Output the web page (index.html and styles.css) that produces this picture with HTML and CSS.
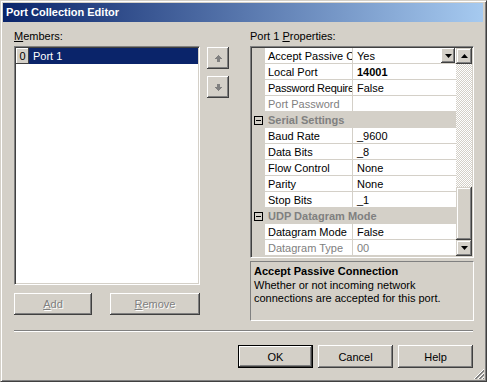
FILE: index.html
```html
<!DOCTYPE html>
<html lang="en">
<head>
    <meta charset="UTF-8">
    <title>Port Collection Editor</title>
    <link rel="stylesheet" href="styles.css">
</head>
<body>
<div class="window">
    <div class="titlebar">Port Collection Editor</div>

    <div class="main">
        <div class="members">
            <div class="label"><u>M</u>embers:</div>
            <div class="listbox">
                <div class="item"><span class="index">0</span><span class="item-text">Port 1</span></div>
            </div>
            <div class="member-buttons">
                <button class="btn btn-add" disabled><u>A</u>dd</button>
                <button class="btn btn-remove" disabled><u>R</u>emove</button>
            </div>
        </div>

        <!-- move up / move down -->
        <div class="order">
            <button class="btn arrow">
                <svg width="7" height="7" viewBox="0 0 7 7"><path d="M3 0h1v1h1v1h1v1h1v1H5v3H2V4H0V3h1V2h1V1h1z" fill="#808080"/></svg>
            </button>
            <button class="btn arrow">
                <svg width="7" height="7" viewBox="0 0 7 7"><path d="M2 0h3v3h2v1H6v1H5v1H4v1H3V6H2V5H1V4H0V3h2z" fill="#808080"/></svg>
            </button>
        </div>

        <div class="properties">
            <div class="label">Port 1 <u>P</u>roperties:</div>
            <div class="grid">
                <div class="rows">
                    <div class="row">
                        <span class="margin"></span>
                        <span class="name">Accept Passive C</span>
                        <span class="value">Yes<span class="drop"><svg width="7" height="4" viewBox="0 0 7 4"><path d="M0 0h7L3.5 4z" fill="#000"/></svg></span></span>
                    </div>
                    <div class="row">
                        <span class="margin"></span>
                        <span class="name">Local Port</span>
                        <span class="value changed">14001</span>
                    </div>
                    <div class="row">
                        <span class="margin"></span>
                        <span class="name tight">Password Require</span>
                        <span class="value">False</span>
                    </div>
                    <div class="row disabled">
                        <span class="margin"></span>
                        <span class="name">Port Password</span>
                        <span class="value"></span>
                    </div>
                    <div class="row category">
                        <span class="margin"><span class="toggle"></span></span>
                        <span class="cat-name">Serial Settings</span>
                    </div>
                    <div class="row">
                        <span class="margin"></span>
                        <span class="name">Baud Rate</span>
                        <span class="value">_9600</span>
                    </div>
                    <div class="row">
                        <span class="margin"></span>
                        <span class="name">Data Bits</span>
                        <span class="value">_8</span>
                    </div>
                    <div class="row">
                        <span class="margin"></span>
                        <span class="name">Flow Control</span>
                        <span class="value">None</span>
                    </div>
                    <div class="row">
                        <span class="margin"></span>
                        <span class="name">Parity</span>
                        <span class="value">None</span>
                    </div>
                    <div class="row">
                        <span class="margin"></span>
                        <span class="name">Stop Bits</span>
                        <span class="value">_1</span>
                    </div>
                    <div class="row category">
                        <span class="margin"><span class="toggle"></span></span>
                        <span class="cat-name">UDP Datagram Mode</span>
                    </div>
                    <div class="row">
                        <span class="margin"></span>
                        <span class="name">Datagram Mode</span>
                        <span class="value">False</span>
                    </div>
                    <div class="row disabled">
                        <span class="margin"></span>
                        <span class="name">Datagram Type</span>
                        <span class="value">00</span>
                    </div>
                </div>
                <div class="scrollbar">
                    <div class="sb-btn"><svg width="7" height="4" viewBox="0 0 7 4"><path d="M3.5 0L7 4H0z" fill="#000"/></svg></div>
                    <div class="sb-track"></div>
                    <div class="sb-thumb"></div>
                    <div class="sb-btn"><svg width="7" height="4" viewBox="0 0 7 4"><path d="M0 0h7L3.5 4z" fill="#000"/></svg></div>
                </div>
            </div>
            <div class="description">
                <div class="desc-title">Accept Passive Connection</div>
                <div class="desc-text">Whether or not incoming network<br>connections are accepted for this port.</div>
            </div>
        </div>
    </div>

    <div class="separator"></div>

    <div class="footer">
        <button class="btn btn-dialog default">OK</button>
        <button class="btn btn-dialog">Cancel</button>
        <button class="btn btn-dialog">Help</button>
    </div>

    <svg class="grip" width="12" height="12" viewBox="0 0 12 12">
        <path d="M11 1L1 11M11 5L5 11M11 9L9 11" stroke="#fff" stroke-width="1"/>
        <path d="M11 2L2 11M11 3L3 11M11 6L6 11M11 7L7 11M11 10L10 11" stroke="#808080" stroke-width="1"/>
    </svg>
</div>
</body>
</html>
```

FILE: styles.css
```css
body {
    margin: 0;
    background: #d4d0c8;
    font-family: "Liberation Sans", Arial, sans-serif;
    font-size: 11px;
    color: #000;
}

.window {
    position: relative;
    width: 487px;
    height: 382px;
    box-sizing: border-box;
    border: 1px solid;
    border-color: #d4d0c8 #404040 #404040 #d4d0c8;
    box-shadow: inset 1px 1px #fff, inset -1px -1px #808080;
    padding: 2px 3px 0 2px;
    background: #d4d0c8;
}

.titlebar {
    height: 19px;
    line-height: 19px;
    padding-left: 3px;
    background: linear-gradient(to right, #0a246a, #a6caf0);
    color: #fff;
    font-weight: bold;
    font-size: 11px;
}

.main {
    display: flex;
    padding-left: 11px;
}

.label {
    padding-top: 8px;
    line-height: 13px;
    margin-bottom: 3px;
}

/* raised 3d button */
.btn {
    display: flex;
    align-items: center;
    justify-content: center;
    box-sizing: border-box;
    padding: 0;
    border: none;
    background: #d4d0c8;
    font-family: inherit;
    font-size: 11px;
    color: #000;
    box-shadow: inset -1px -1px #404040, inset 1px 1px #fff, inset -2px -2px #808080, inset 2px 2px #d4d0c8;
}

.btn:disabled {
    color: #808080;
    text-shadow: 1px 1px #fff;
}

/* members */
.members {
    width: 186px;
}

.listbox {
    height: 239px;
    box-sizing: border-box;
    border: 1px solid;
    border-color: #808080 #fff #fff #808080;
    box-shadow: inset 1px 1px #404040, inset -1px -1px #d4d0c8;
    padding: 1px;
    background: #fff;
}

.item {
    display: flex;
    height: 16px;
    line-height: 16px;
}

.index {
    width: 13px;
    box-sizing: border-box;
    text-align: center;
    background: #d4d0c8;
    box-shadow: inset -1px -1px #404040, inset 1px 1px #fff;
}

.item-text {
    flex: 1;
    padding-left: 4px;
    background: #0a246a;
    color: #fff;
}

.member-buttons {
    display: flex;
    justify-content: space-between;
    margin-top: 8px;
}

.btn-add {
    width: 78px;
    height: 22px;
}

.btn-remove {
    width: 90px;
    height: 22px;
}

/* move up / down */
.order {
    display: flex;
    flex-direction: column;
    gap: 7px;
    width: 22px;
    margin-left: 7px;
    padding-top: 25px;
}

.arrow {
    width: 22px;
    height: 22px;
}

/* property grid */
.properties {
    width: 224px;
    margin-left: 21px;
}

.grid {
    display: flex;
    height: 212px;
    box-sizing: border-box;
    border: 1px solid;
    border-color: #808080 #fff #fff #808080;
    box-shadow: inset 1px 1px #404040, inset -1px -1px #d4d0c8;
    padding: 1px;
    background: #fff;
}

.rows {
    width: 204px;
}

.row {
    display: grid;
    grid-template-columns: 13px 88px 1fr;
    height: 16px;
    line-height: 16px;
}

.margin {
    background: #d4d0c8;
}

.name,
.value {
    box-sizing: border-box;
    border-bottom: 1px solid #d4d0c8;
    white-space: nowrap;
    overflow: hidden;
}

.name {
    padding-left: 3px;
    border-right: 1px solid #d4d0c8;
}

.tight {
    letter-spacing: -0.25px;
}

.value {
    display: flex;
    padding-left: 4px;
}

.changed {
    font-weight: bold;
}

.disabled .name,
.disabled .value {
    color: #808080;
}

.drop {
    display: flex;
    align-items: center;
    justify-content: center;
    width: 14px;
    height: 15px;
    margin-left: auto;
    margin-right: 1px;
    box-sizing: border-box;
    background: #d4d0c8;
    box-shadow: inset -1px -1px #404040, inset 1px 1px #fff, inset -2px -2px #808080;
}

.category {
    grid-template-columns: 13px 1fr;
    background: #d4d0c8;
}

.category .margin {
    display: flex;
    align-items: center;
    justify-content: center;
}

.toggle {
    position: relative;
    width: 9px;
    height: 9px;
    box-sizing: border-box;
    border: 1px solid #000;
    background: #d4d0c8;
}

.toggle::after {
    content: "";
    position: absolute;
    left: 1px;
    top: 3px;
    width: 5px;
    height: 1px;
    background: #000;
}

.cat-name {
    padding-left: 3px;
    font-weight: bold;
    color: #808080;
}

.scrollbar {
    display: flex;
    flex-direction: column;
    width: 16px;
}

.sb-btn {
    display: flex;
    align-items: center;
    justify-content: center;
    height: 16px;
    background: #d4d0c8;
    box-shadow: inset -1px -1px #404040, inset 1px 1px #d4d0c8, inset -2px -2px #808080, inset 2px 2px #fff;
}

.sb-track {
    flex: 1;
    background: repeating-conic-gradient(#d4d0c8 0 25%, #fff 0 50%) 0 0 / 2px 2px;
}

.sb-thumb {
    height: 53px;
    background: #d4d0c8;
    box-shadow: inset -1px -1px #404040, inset 1px 1px #d4d0c8, inset -2px -2px #808080, inset 2px 2px #fff;
}

.description {
    height: 60px;
    margin-top: 3px;
    box-sizing: border-box;
    border: 1px solid;
    border-color: #808080 #fff #fff #808080;
    padding: 2px 3px;
}

.desc-title {
    font-weight: bold;
    line-height: 15px;
}

.desc-text {
    line-height: 13px;
}

/* bottom */
.separator {
    margin: 9px 10px 0 11px;
    border-top: 1px solid #808080;
    border-bottom: 1px solid #fff;
}

.footer {
    display: flex;
    justify-content: flex-end;
    gap: 5px;
    margin-top: 13px;
    padding-right: 10px;
}

.btn-dialog {
    width: 75px;
    height: 23px;
}

.default {
    border: 1px solid #000;
    box-shadow: inset -1px -1px #404040, inset 1px 1px #fff, inset -2px -2px #808080;
}

.grip {
    position: absolute;
    right: 1px;
    bottom: 1px;
}
```
